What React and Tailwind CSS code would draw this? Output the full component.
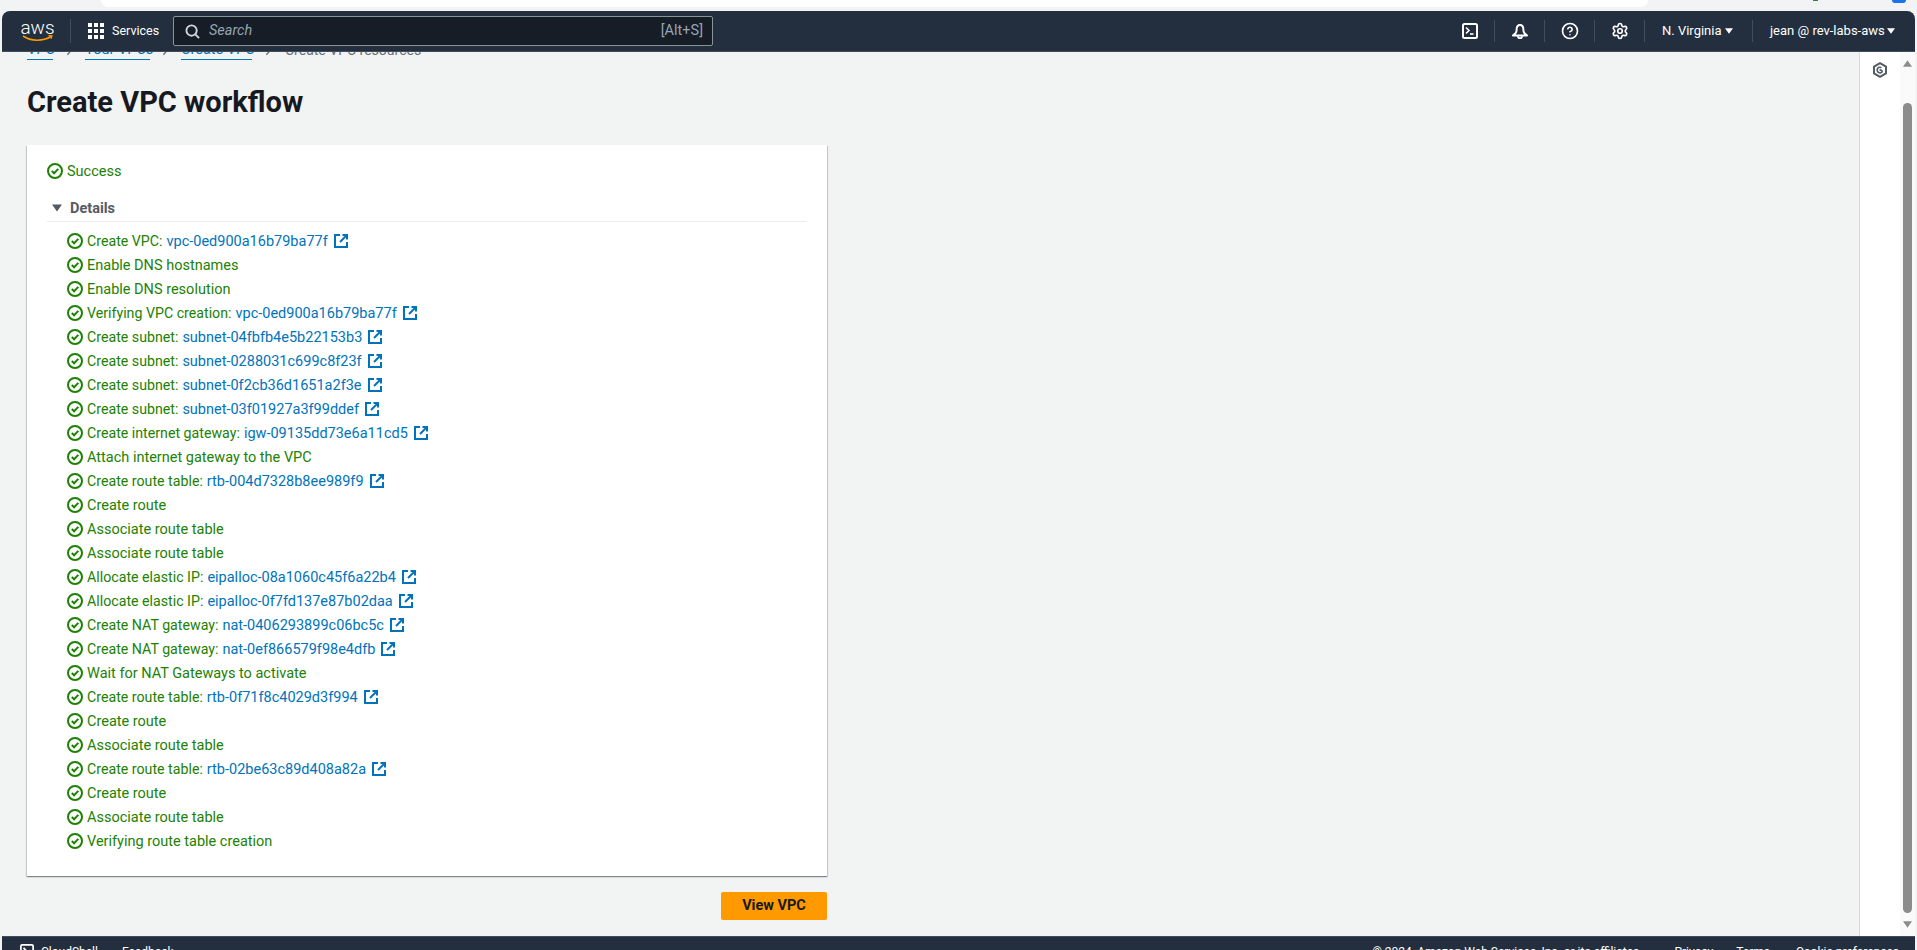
import React from 'react';
import { Settings, CircleHelp } from 'lucide-react';

const steps = [
  ['Create VPC:', 'vpc-0ed900a16b79ba77f'],
  ['Enable DNS hostnames'],
  ['Enable DNS resolution'],
  ['Verifying VPC creation:', 'vpc-0ed900a16b79ba77f'],
  ['Create subnet:', 'subnet-04fbfb4e5b22153b3'],
  ['Create subnet:', 'subnet-0288031c699c8f23f'],
  ['Create subnet:', 'subnet-0f2cb36d1651a2f3e'],
  ['Create subnet:', 'subnet-03f01927a3f99ddef'],
  ['Create internet gateway:', 'igw-09135dd73e6a11cd5'],
  ['Attach internet gateway to the VPC'],
  ['Create route table:', 'rtb-004d7328b8ee989f9'],
  ['Create route'],
  ['Associate route table'],
  ['Associate route table'],
  ['Allocate elastic IP:', 'eipalloc-08a1060c45f6a22b4'],
  ['Allocate elastic IP:', 'eipalloc-0f7fd137e87b02daa'],
  ['Create NAT gateway:', 'nat-0406293899c06bc5c'],
  ['Create NAT gateway:', 'nat-0ef866579f98e4dfb'],
  ['Wait for NAT Gateways to activate'],
  ['Create route table:', 'rtb-0f71f8c4029d3f994'],
  ['Create route'],
  ['Associate route table'],
  ['Create route table:', 'rtb-02be63c89d408a82a'],
  ['Create route'],
  ['Associate route table'],
  ['Verifying route table creation'],
];

const CheckIcon = () => (
  <svg className="w-4 h-4 shrink-0" viewBox="0 0 16 16" fill="none" stroke="#1d8102" strokeWidth="2">
    <circle cx="8" cy="8" r="7" />
    <path d="M4.800 8l2.300 2.300 4.200-4.400" />
  </svg>
);

const ExternalIcon = () => (
  <svg className="w-4 h-4 shrink-0" viewBox="0 0 16 16" fill="none" stroke="#0073bb" strokeWidth="2">
    <path d="M14 9v5H2V2h5" />
    <path d="M9.500 2H14v4.500" />
    <path d="M14 2L7 9" />
  </svg>
);

const Caret = ({ className }) => (
  <svg className={className} viewBox="0 0 10 7" fill="currentColor">
    <path d="M0 0h10L5 7z" />
  </svg>
);

const Chevron = ({ className }) => (
  <svg className={className} viewBox="0 0 8 14" fill="none" stroke="#687078" strokeWidth="1.600">
    <path d="M1.500 1.500L6.500 7 1.500 12.500" />
  </svg>
);

const Separator = () => <div className="w-px h-[22px] bg-[#414d5c]" />;

const Header = () => (
  <header className="h-[41px] shrink-0 bg-[#232f3e] rounded-t-lg flex items-center text-white text-[14px] border-b border-[#414d5c] relative z-10">
    <div className="w-[31px] ml-[20px] flex flex-col items-center">
      <span className="text-[19px] leading-[15px] font-light">aws</span>
      <svg className="w-[31px] h-[7px]" viewBox="0 0 31 7" fill="none">
        <path d="M1 1c8 5.500 20 5.500 28 .5" stroke="#ff9900" strokeWidth="1.600" />
        <path d="M26.500 .6L30 .8 29 3.800" stroke="#ff9900" strokeWidth="1.200" />
      </svg>
    </div>
    <div className="w-px h-[24px] bg-[#414d5c] ml-[17px]" />
    <div className="ml-[17px] grid grid-cols-3 gap-[2px]">
      {[...Array(9)].map((_, i) => (
        <span key={i} className="w-[4px] h-[4px] bg-white" />
      ))}
    </div>
    <span className="ml-[8px] w-[46px] text-[12.500px] whitespace-nowrap">Services</span>
    <div className="ml-[15px] w-[540px] h-[30px] bg-[#161d26] border border-[#879596] rounded-[2px] flex items-center pl-[11px] pr-[9px]">
      <svg className="w-[15px] h-[15px]" viewBox="0 0 16 16" fill="none" stroke="#d1d5db" strokeWidth="2">
        <circle cx="7" cy="7" r="5.500" />
        <path d="M11 11l4 4" />
      </svg>
      <span className="ml-[9px] italic text-[#95a5b5] text-[14.500px]">Search</span>
      <span className="ml-auto text-[#95a5b5] text-[14.500px]">[Alt+S]</span>
    </div>
    <div className="ml-auto flex items-center">
      <svg className="w-4 h-4" viewBox="0 0 16 16" fill="none" stroke="white" strokeWidth="2">
        <rect x="1" y="1" width="14" height="14" rx="1.500" />
        <path d="M4 4.500L7 7.500 4 10.500" strokeWidth="1.600" />
        <path d="M8 11h3.500" strokeWidth="1.600" />
      </svg>
      <div className="ml-[16px] mr-[17px]"><Separator /></div>
      <svg className="w-4 h-4" viewBox="0 0 16 16" fill="none" stroke="white" strokeWidth="2">
        <path d="M1 12.500h14L12.300 10c-.8-1-.9-2-.9-3.200C11.400 4 10 2 8 2S4.600 4 4.600 6.800c0 1.200-.1 2.200-.9 3.200z" strokeLinejoin="round" />
        <path d="M6 13.200a2 2 0 0 0 4 0" />
      </svg>
      <div className="ml-[16px] mr-[17px]"><Separator /></div>
      <CircleHelp className="w-[18px] h-[18px] -mx-px" strokeWidth={2.200} />
      <div className="ml-[16px] mr-[17px]"><Separator /></div>
      <Settings className="w-[18px] h-[18px] -mx-px" strokeWidth={2.200} />
      <div className="ml-[16px] mr-[17px]"><Separator /></div>
      <span className="whitespace-nowrap text-[13px] w-[56px]">N. Virginia</span>
      <Caret className="w-[8px] h-[6px] ml-[7px]" />
      <div className="ml-[19px] mr-[17px]"><Separator /></div>
      <span className="whitespace-nowrap text-[13px] w-[109px]">jean @ rev-labs-aws</span>
      <Caret className="w-[8px] h-[6px] ml-[8px] mr-[20px]" />
    </div>
  </header>
);

const Breadcrumbs = () => (
  <nav className="-mt-3 flex items-center text-[14.500px] leading-[18px] h-[20px]">
    <a className="text-[#0073bb] border-b border-[#0073bb] w-[26px] whitespace-nowrap">VPC</a>
    <span className="w-[32px] flex justify-center"><Chevron className="w-[7px] h-[12px]" /></span>
    <a className="text-[#0073bb] border-b border-[#0073bb] w-[65px] whitespace-nowrap">Your VPCs</a>
    <span className="w-[31px] flex justify-center"><Chevron className="w-[7px] h-[12px]" /></span>
    <a className="text-[#0073bb] border-b border-[#0073bb] w-[71px] whitespace-nowrap">Create VPC</a>
    <span className="w-[33px] flex justify-center"><Chevron className="w-[7px] h-[12px]" /></span>
    <span className="text-[#687078] text-[14px] whitespace-nowrap">Create VPC resources</span>
  </nav>
);

const Footer = () => (
  <footer className="h-[14px] shrink-0 bg-[#232f3e] border-t border-[#414d5c] text-white text-[12px] overflow-hidden flex items-start pt-[7px] leading-[16px]">
    <svg className="w-[14px] h-[14px] ml-[18px] shrink-0" viewBox="0 0 16 16" fill="none" stroke="white" strokeWidth="2">
      <rect x="1" y="1" width="14" height="14" rx="1.500" />
      <path d="M4 4.500L7 7.500 4 10.500" />
    </svg>
    <span className="ml-[7px]">CloudShell</span>
    <span className="ml-[24px]">Feedback</span>
    <span className="ml-auto">© 2024, Amazon Web Services, Inc. or its affiliates.</span>
    <span className="ml-[32px]">Privacy</span>
    <span className="ml-[23px]">Terms</span>
    <span className="ml-[26px] mr-[16px]">Cookie preferences</span>
  </footer>
);

const RightPanel = () => (
  <aside className="w-[56px] shrink-0 bg-white border-l border-[#d5dbdb] flex">
    <div className="w-[40px] flex justify-center pt-[10px]">
      <svg className="w-[16px] h-[16px]" viewBox="0 0 16 16" fill="none" stroke="#545b64" strokeWidth="2">
        <path d="M8 1.200l6 3.400v6.800l-6 3.400-6-3.400V4.600z" strokeLinejoin="round" />
        <path d="M10.500 9.200A2.800 2.800 0 1 1 9.500 5.700" strokeWidth="1.600" />
        <path d="M7.500 7.500l3 1.500" strokeWidth="1.600" />
      </svg>
    </div>
    <div className="flex-1 bg-[#fafafa] flex flex-col items-center pt-[8px] pb-[8px] text-[#8c8c8c]">
      <Caret className="w-[9px] h-[7px] rotate-180" />
      <div className="w-[9px] flex-1 bg-[#8c8c8c] rounded-full mt-[36px] mb-[8px]" />
      <Caret className="w-[9px] h-[7px]" />
    </div>
  </aside>
);

export default function App() {
  return (
    <div className="h-[950px] overflow-hidden bg-[#f1f3f4] flex flex-col font-['Roboto',sans-serif]">
      <div className="h-[11px] shrink-0 flex items-start">
        <div className="ml-[101px] w-[1547px] h-[7px] bg-white rounded-b-lg" />
        <div className="ml-[165px] w-[5px] h-[1px] bg-[#1e8e3e]" />
        <div className="ml-[74px] w-[14px] h-[3px] bg-[#1a73e8] rounded-b" />
      </div>
      <div className="flex-1 min-h-0 flex flex-col mx-[2px]">
        <Header />
        <div className="flex-1 min-h-0 flex">
          <main className="flex-1 bg-[#f2f3f3] overflow-hidden pl-[25px]">
            <Breadcrumbs />
            <h1 className="mt-6 text-[29px] leading-[36px] font-bold text-[#16191f]">Create VPC workflow</h1>
            <section className="mt-[25px] w-[800px] h-[731px] bg-white shadow-[0_1px_1px_0_rgba(0,28,36,0.3),1px_1px_1px_0_rgba(0,28,36,0.15),-1px_1px_1px_0_rgba(0,28,36,0.15)] pt-[16px] px-[20px]">
              <div className="flex items-center gap-[4px] h-[20px] text-[14.500px] text-[#1d8102]">
                <CheckIcon />
                <span className="mt-[2px]">Success</span>
              </div>
              <div className="mt-[17px] h-[24px] flex items-start border-b border-[#eaeded] text-[14.500px] font-bold text-[#545b64]">
                <Caret className="w-[10px] h-[8px] ml-[5px] mr-[8px] mt-[6px]" />
                <span className="leading-[20px] mt-[1px]">Details</span>
              </div>
              <ul className="mt-[7px] pl-[20px]">
                {steps.map(([label, link], i) => (
                  <li key={i} className="h-[24px] flex items-center text-[14.500px] text-[#1d8102] whitespace-nowrap">
                    <CheckIcon />
                    <span className={link ? 'ml-[4px] mt-[2px] text-[14.200px]' : 'ml-[4px] mt-[2px]'}>{label}</span>
                    {link && (
                      <>
                        <a className="ml-[4px] mt-[2px] text-[#0073bb]">{link}</a>
                        <span className="ml-[5px]"><ExternalIcon /></span>
                      </>
                    )}
                  </li>
                ))}
              </ul>
            </section>
            <div className="mt-[16px] w-[800px] flex justify-end">
              <button className="w-[106px] h-[28px] bg-[#ff9900] rounded-[2px] text-[14.500px] font-bold text-[#16191f]">View VPC</button>
            </div>
          </main>
          <RightPanel />
        </div>
        <Footer />
      </div>
    </div>
  );
}
